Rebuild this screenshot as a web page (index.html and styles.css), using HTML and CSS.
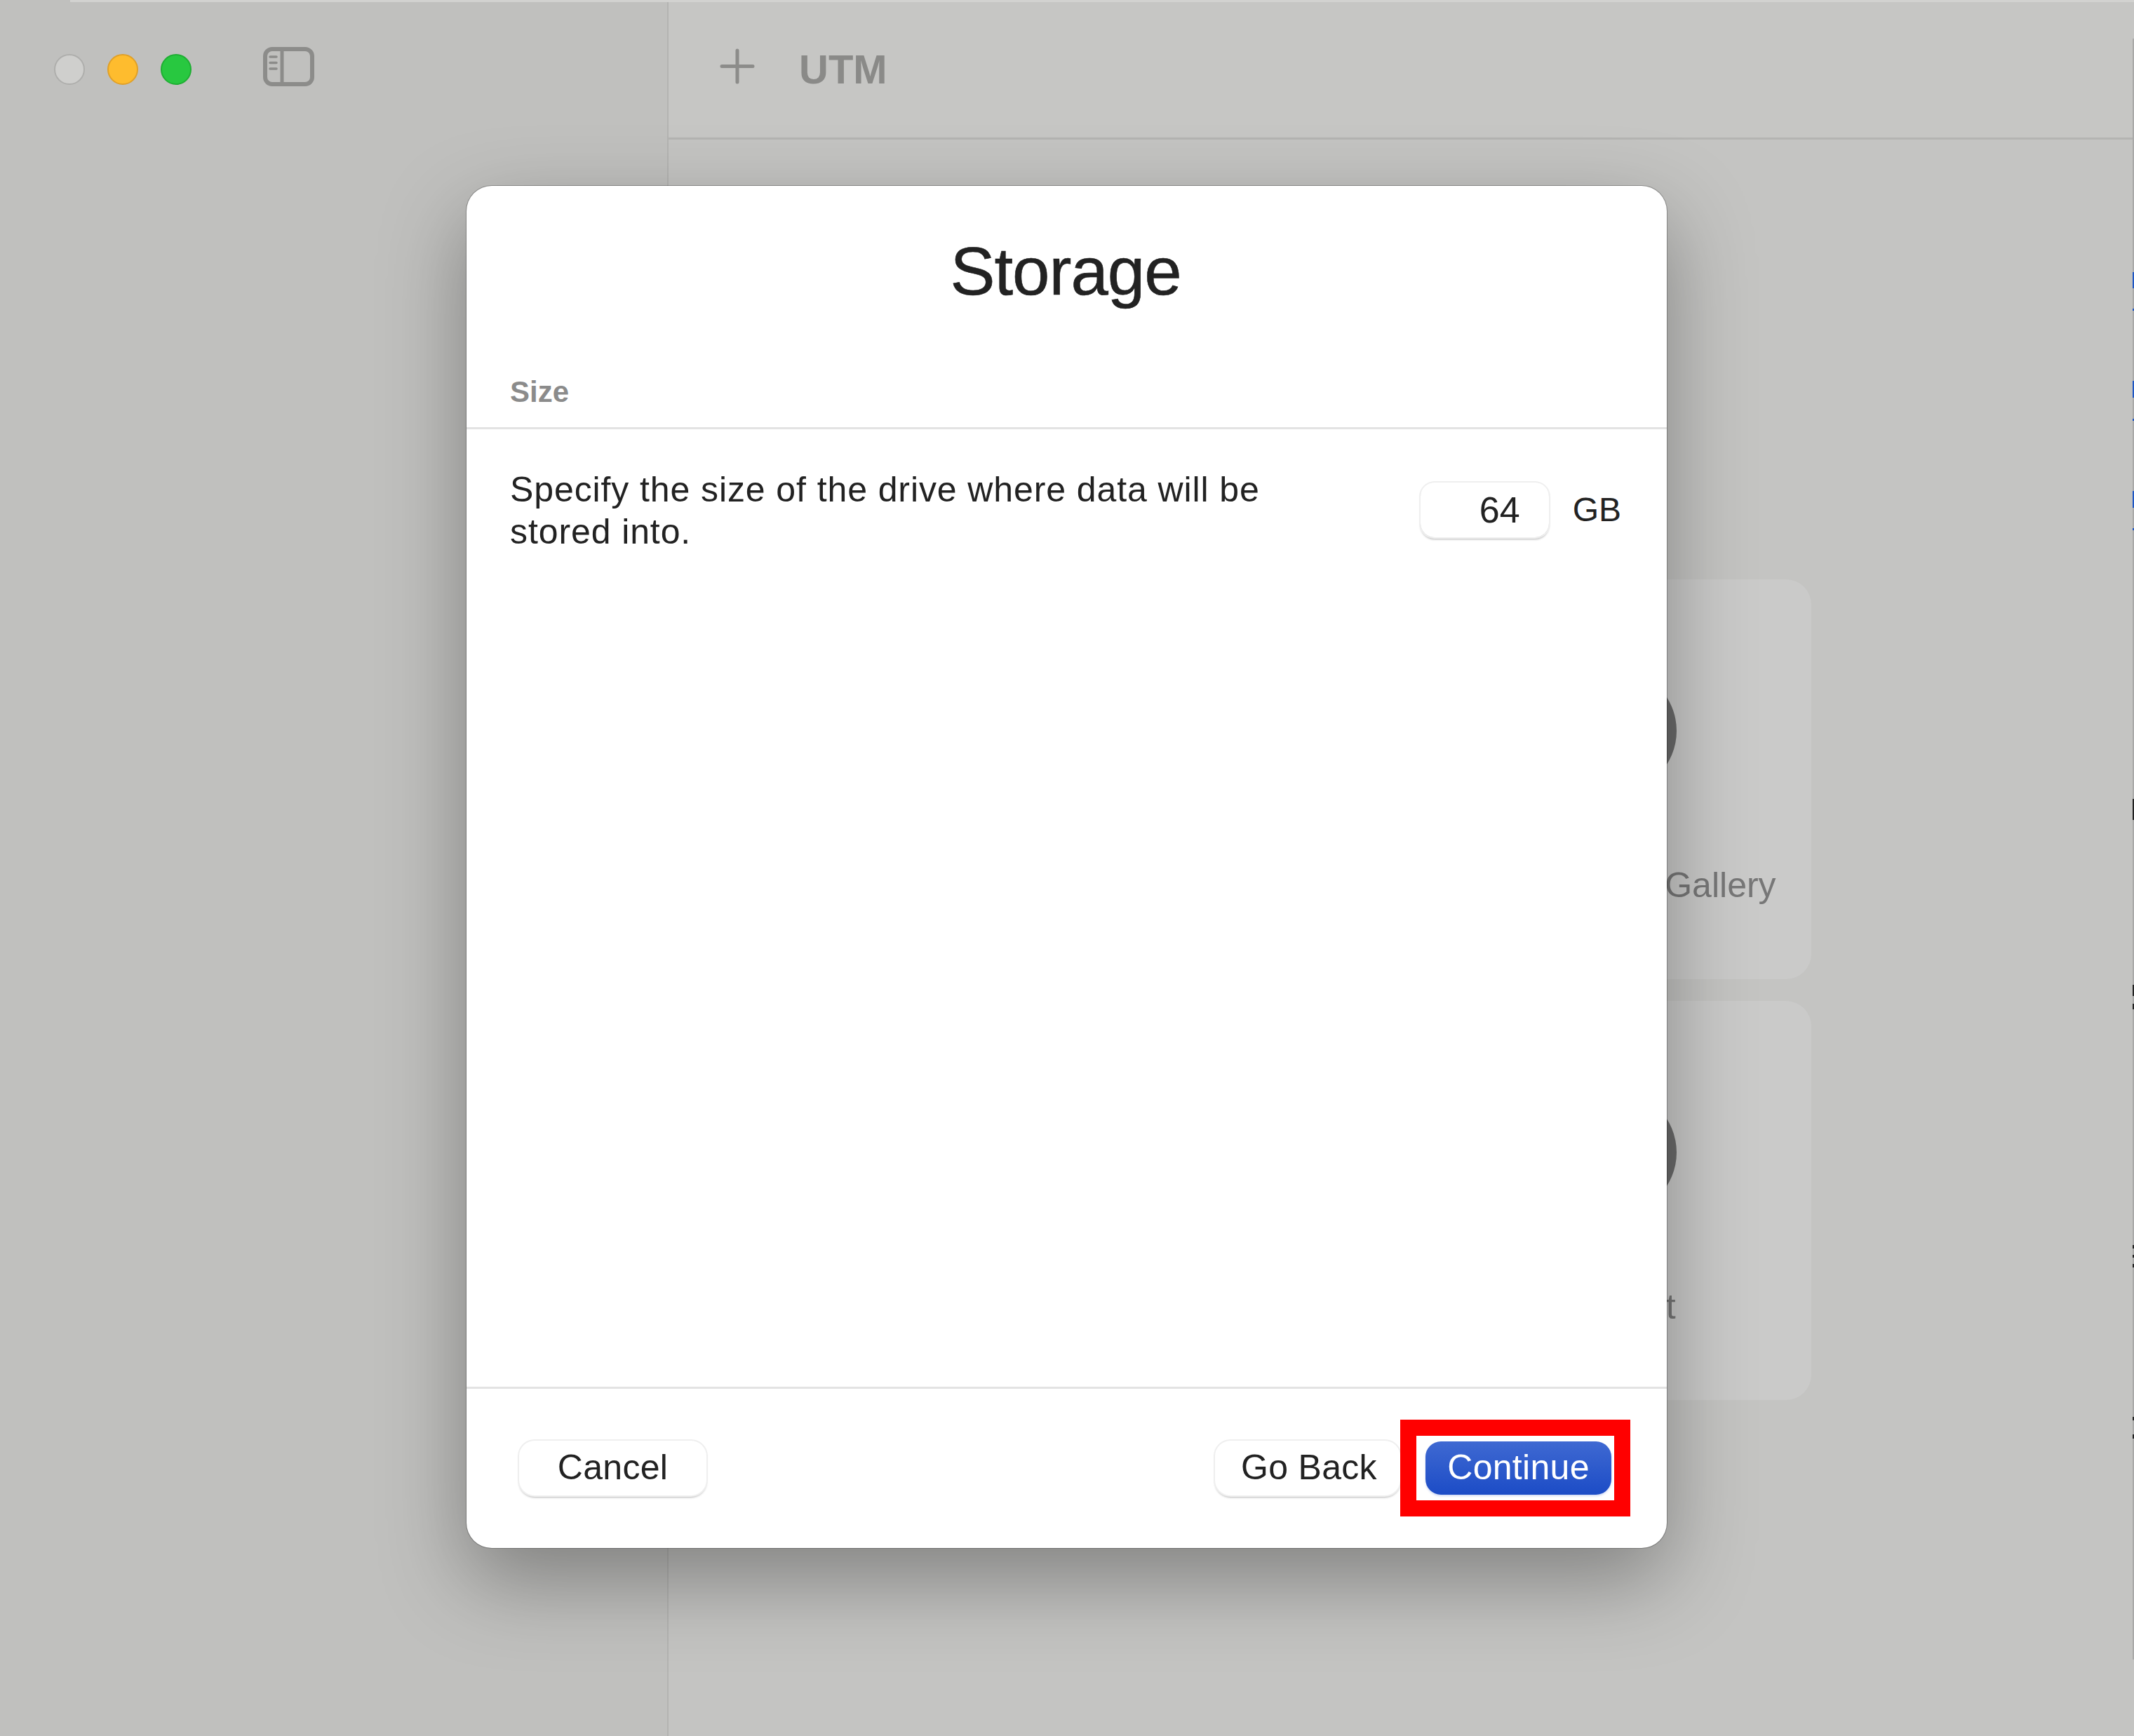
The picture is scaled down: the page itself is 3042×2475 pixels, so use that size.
FILE: index.html
```html
<!DOCTYPE html>
<html lang="en">

<head>
    <meta charset="UTF-8">
    <meta name="viewport" content="width=device-width, initial-scale=1.0">
    <title>UTM - Storage</title>
    <link rel="stylesheet" href="styles.css">
</head>

<body>
<div class="window">
    <div class="window-edge"></div>

    <aside class="sidebar">
        <div class="sidebar-head">
            <span class="light light-close"></span>
            <span class="light light-min"></span>
            <span class="light light-max"></span>
            <svg class="sidebar-icon" viewBox="0 0 73 56" fill="none" stroke="#8c8c8a">
                <rect x="3" y="3" width="67" height="50" rx="10" stroke-width="6"/>
                <path d="M27 3V53" stroke-width="5"/>
                <path d="M10 14H19M10 22.500H19M10 31H19" stroke-width="3.500" stroke-linecap="round"/>
            </svg>
        </div>
    </aside>

    <main class="content">
        <header class="toolbar">
            <svg class="plus-icon" viewBox="0 0 50 51" fill="none" stroke="#8c8c8a" stroke-width="5" stroke-linecap="round">
                <path d="M25 3V48M3 25.500H47"/>
            </svg>
            <span class="toolbar-title">UTM</span>
        </header>

        <div class="cards">
            <div class="card"></div>
            <div class="card">
                <span class="card-circle"></span>
                <span class="card-label">Browse UTM Gallery</span>
            </div>
            <div class="card"></div>
            <div class="card">
                <span class="card-circle"></span>
                <span class="card-label">Support</span>
            </div>
        </div>
    </main>

    <!-- sliver of the window next to this one -->
    <svg class="next-window" viewBox="0 0 2 2475" preserveAspectRatio="none">
        <rect y="55" width="2" height="2311" fill="#a9a9a8"/>
        <g fill="#1f57c4">
            <rect y="388" width="2" height="23"/>
            <rect y="440" width="2" height="3"/>
            <rect y="543" width="2" height="24"/>
            <rect y="597" width="2" height="3"/>
            <rect y="700" width="2" height="24"/>
            <rect y="753" width="2" height="3"/>
        </g>
        <g fill="#222">
            <rect y="1139" width="2" height="30"/>
            <rect y="1404" width="2" height="16"/>
            <rect y="1431" width="2" height="8"/>
            <rect y="1775" width="2" height="5"/>
            <rect y="1789" width="2" height="4"/>
            <rect y="1802" width="2" height="5"/>
            <rect y="2020" width="2" height="5"/>
            <rect y="2045" width="2" height="6"/>
        </g>
    </svg>

    <div class="dialog">
        <h2 class="dialog-title">Storage</h2>
        <div class="section-label">Size</div>
        <div class="dialog-body">
            <p class="description">Specify the size of the drive where data will be stored into.</p>
            <div class="size-field">64</div>
            <span class="size-unit">GB</span>
        </div>
        <div class="dialog-footer">
            <button type="button" class="btn">Cancel</button>
            <div class="footer-right">
                <button type="button" class="btn btn-back">Go Back</button>
                <div class="highlight">
                    <button type="button" class="btn btn-primary">Continue</button>
                </div>
            </div>
        </div>
    </div>
</div>
</body>

</html>
```

FILE: styles.css
```css
body {
    font-family: "Liberation Sans", Arial, sans-serif;
    margin: 0;
    padding: 0;
    color: #222;
}

.window {
    position: relative;
    display: flex;
    height: 100vh;
    overflow: hidden;
    background-color: #c4c4c2;
}

.window-edge {
    position: absolute;
    top: 0;
    left: 100px;
    right: 0;
    height: 3px;
    background-color: #d2d2d0;
}

/* sidebar */
.sidebar {
    width: 951px;
    flex-shrink: 0;
    background-color: #c0c0be;
    border-right: 2px solid #b4b4b2;
}

.sidebar-head {
    display: flex;
    align-items: center;
    height: 198px;
    padding-left: 77px;
    gap: 32px;
}

.light {
    width: 44px;
    height: 44px;
    border-radius: 50%;
    box-sizing: border-box;
    border: 2px solid;
}

.light-close {
    background-color: #cfcfcd;
    border-color: #aeaeac;
}

.light-min {
    background-color: #febc2e;
    border-color: #e0a028;
}

.light-max {
    background-color: #28c840;
    border-color: #1fae33;
}

.sidebar-icon {
    width: 73px;
    height: 56px;
    margin-left: 70px;
    margin-top: -8px;
}

/* main area */
.content {
    flex: 1;
    min-width: 0;
}

.toolbar {
    display: flex;
    align-items: center;
    gap: 63px;
    height: 196px;
    padding-left: 73px;
    background-color: #c6c6c4;
    border-bottom: 3px solid #b4b4b2;
}

.plus-icon {
    width: 50px;
    height: 51px;
    margin-top: -8px;
}

.toolbar-title {
    font-size: 58px;
    font-weight: bold;
    color: #8a8a88;
}

.cards {
    display: grid;
    grid-template-columns: 562px 562px;
    grid-template-rows: 570px 569px;
    gap: 31px;
    padding: 627px 0 0 474px;
}

.card {
    display: flex;
    flex-direction: column;
    align-items: center;
    border-radius: 36px;
    background-color: #cacac9;
}

.card-circle {
    width: 178px;
    height: 178px;
    margin-top: 127px;
    border-radius: 50%;
    background-color: #6b6b6b;
}

.card-label {
    margin-top: 102px;
    font-size: 50px;
    color: #777;
    white-space: nowrap;
}

/* dialog */
.dialog {
    position: absolute;
    top: 265px;
    left: 665px;
    width: 1711px;
    height: 1942px;
    display: flex;
    flex-direction: column;
    border-radius: 36px;
    background-color: #fff;
    box-shadow: 0 0 0 1px rgba(0, 0, 0, 0.25), 0 45px 120px rgba(0, 0, 0, 0.34);
}

.dialog-title {
    margin: 0;
    padding: 67px 3px 0 0;
    font-size: 96px;
    font-weight: normal;
    line-height: 110px;
    letter-spacing: -1px;
    text-align: center;
    -webkit-text-stroke: 0.6px #222;
}

.section-label {
    margin-top: 92px;
    padding: 0 0 25px 62px;
    font-size: 42px;
    font-weight: bold;
    line-height: 50px;
    color: #8b8b8b;
    border-bottom: 3px solid #e3e3e3;
}

.dialog-body {
    flex: 1;
    display: flex;
    align-items: flex-start;
    padding: 56px 65px 0 62px;
}

.description {
    width: 1120px;
    margin: 0 183px 0 0;
    font-size: 50px;
    line-height: 60px;
    letter-spacing: 0.9px;
}

.size-field {
    width: 183px;
    height: 78px;
    margin-top: 20px;
    box-sizing: border-box;
    padding-right: 41px;
    font-size: 52px;
    line-height: 78px;
    text-align: right;
    border-radius: 20px;
    box-shadow: 0 0 0 2px #efefef, 0 3px 3px rgba(0, 0, 0, 0.28);
}

.size-unit {
    margin: 20px 0 0 34px;
    font-size: 48px;
    line-height: 78px;
}

.dialog-footer {
    display: flex;
    justify-content: space-between;
    align-items: center;
    height: 225px;
    padding: 0 52px 2px 75px;
    border-top: 3px solid #e3e3e3;
}

.footer-right {
    display: flex;
    align-items: center;
}

.btn {
    width: 267px;
    height: 78px;
    padding: 0 0 2px;
    font-family: inherit;
    font-size: 50px;
    letter-spacing: 0.3px;
    color: #222;
    background-color: #fff;
    border: none;
    border-radius: 22px;
    box-shadow: 0 0 0 2px #efefef, 0 3px 3px rgba(0, 0, 0, 0.28);
}

.btn-back {
    width: 264px;
    padding-left: 4px;
}

.highlight {
    display: flex;
    box-sizing: border-box;
    width: 328px;
    height: 138px;
    padding: 8px 4px 8px 13px;
    border: 23px solid #f00;
    background-color: #fff;
}

.btn-primary {
    width: 265px;
    height: 76px;
    color: #fff;
    background: linear-gradient(#3f69d2, #1c4cc6);
    box-shadow: 0 2px 3px rgba(28, 76, 198, 0.2);
}

.next-window {
    position: absolute;
    top: 0;
    right: 0;
    width: 2px;
    height: 100%;
}
```
